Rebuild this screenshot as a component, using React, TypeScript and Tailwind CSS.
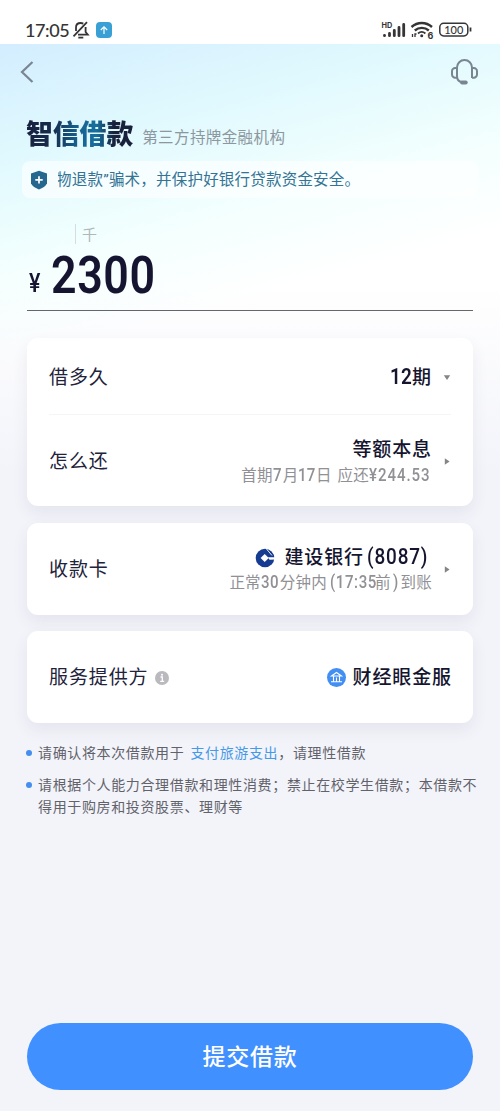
import React from 'react';

function StatusBar() {
  return (
    <header className="flex h-11 shrink-0 items-center justify-between bg-white pt-[15px] pl-[25px] pr-[28px] text-[#353535]">
      <div className="flex items-center">
        <span className="w-[47px] font-['Lato','Noto_Sans_CJK_SC',sans-serif] text-[18px] leading-5 font-medium tracking-[-0.400px] whitespace-nowrap">17:05</span>
        <svg width="18" height="20" viewBox="0 0 18 20" fill="none" stroke="currentColor" strokeWidth="1.800">
          <path d="M15 2.200 1.500 16.300" />
          <path d="M4 11V7.500C4 4.500 6 3 8.700 3c1 0 1.800.2 2.600.6M13.600 7v5l2.200 2.700H6" />
          <path d="M6.300 17.600h5" />
        </svg>
        <span className="ml-[6px] flex size-4 items-center justify-center rounded-[4px] bg-[#39a0d6]">
          <svg width="10" height="10" viewBox="0 0 10 10" fill="none" stroke="white" strokeWidth="1.200"><path d="M5 9V2M1.800 5 5 1.800 8.200 5" /></svg>
        </span>
      </div>
      <svg width="92" height="20" viewBox="380 19.500 92 20" fill="none" stroke="currentColor">
        <text x="381.500" y="27.300" fontFamily="Inter, sans-serif" fontSize="7.300" fontWeight="700" fill="currentColor" stroke="none">HD</text>
        <g strokeWidth="2.800" strokeLinecap="round">
          <path d="M384.500 34.800v.4M389.500 33v2.200M394.300 29.800v5.400M399 27v8.200M403.700 24v11.200" />
        </g>
        <g strokeWidth="2.400">
          <path d="M411.500 26.500c6-5.300 14.500-5.300 20.500 0M414.800 30c4-3.500 10-3.500 14 0" />
          <path d="M418 33c2.200-1.900 5.200-1.900 7.400 0" strokeWidth="1.800" />
        </g>
        <circle cx="421.700" cy="35.200" r="1.500" fill="currentColor" stroke="none" />
        <path d="M412.500 33.500v3M415 36.500v-3h1.500" strokeWidth="1.300" />
        <text x="427.500" y="38" fontFamily="Inter, sans-serif" fontSize="9" fontWeight="700" fill="currentColor" stroke="none">6</text>
        <rect x="439.800" y="22.800" width="28" height="12.600" rx="3.800" strokeWidth="1.500" />
        <path d="M470.500 27v4" strokeWidth="1.800" />
        <text x="453.800" y="33.200" textAnchor="middle" fontFamily="Lato, sans-serif" fontSize="11" fontWeight="500" fill="currentColor" stroke="none">100</text>
      </svg>
    </header>
  );
}

function NavBar() {
  return (
    <nav className="flex h-[56px] items-center justify-between pl-5 pr-[21px] text-[#798590]">
      <svg width="14" height="22" viewBox="0 0 14 22" fill="none" stroke="currentColor" strokeWidth="2.200"><path d="M12.500 1 2 11l10.500 10" /></svg>
      <svg width="29" height="28" viewBox="0 0 29 28" fill="none" stroke="currentColor" strokeWidth="2">
        <path d="M7 20V9.500a7.500 7.500 0 0 1 15 0V20" />
        <path d="M6.500 10H5.300A3.200 3.200 0 0 0 2 13.200v3.300a3.200 3.200 0 0 0 3.300 3.200H7M22.500 10h1.200a3.200 3.200 0 0 1 3.300 3.200v3.300a3.200 3.200 0 0 1-3.300 3.200H22" />
        <path d="M7 18c0 3.500 2 5.800 5 6" />
        <path d="M12 24.500h3.800" strokeWidth="3.800" strokeLinecap="round" />
      </svg>
    </nav>
  );
}

function Arrow({ down = false }: { down?: boolean }) {
  return (
    <svg width="8" height="8" viewBox="0 0 8 8" fill="#858589" className="shrink-0">
      <path d={down ? 'M.8 1.200h6.400L4 6z' : 'M1.800.3v6.400L6.600 3.500z'} />
    </svg>
  );
}

/* Condensed figures; `box` sets the width, the type size and the weight. */
function Num({ box, children }: { box: string; children: string }) {
  return (
    <span className={`inline-block leading-none ${box}`}>
      <span className="inline-block origin-left scale-x-[0.860] whitespace-nowrap">{children}</span>
    </span>
  );
}

const label = 'text-[19px] leading-6 tracking-[0.900px] text-[#22223a] whitespace-nowrap';
const value = 'text-[19px] leading-6 font-medium tracking-[0.900px] text-[#15152f] whitespace-nowrap';
const detail = 'text-[15.500px] leading-5 tracking-[0.200px] text-[#909095] whitespace-nowrap';
const card = 'rounded-[11px] bg-white px-[22px] shadow-[0_7px_16px_rgba(60,60,90,0.08)]';

function BankLogo() {
  return (
    <svg width="20" height="20" viewBox="0 0 20 20" className="mr-[9px] shrink-0">
      <circle cx="10" cy="10" r="9.300" fill="#153c91" />
      <path d="m9.700 5.900 4.100 4.100-4.100 4.100L5.600 10z" fill="white" />
      <path d="M13 9.300h7v2.200l-5.500.2z" fill="white" />
      <path d="m11.500 1 5.500 6.500" stroke="white" strokeWidth="0.900" />
    </svg>
  );
}

export default function App() {
  return (
    <div className="flex h-[1111px] w-[500px] flex-col overflow-hidden bg-[#f3f4fa] font-['Roboto','Noto_Sans_CJK_SC',sans-serif]">
      <StatusBar />
      <main className="flex flex-1 flex-col bg-[linear-gradient(180deg,rgba(243,244,250,0)_240px,#f3f4fa_430px),linear-gradient(165deg,#d3edff_0px,#e0f9fe_110px,#f3fffe_220px,#ffffff_310px)]">
        <NavBar />
        <div className="flex h-[61px] items-end pl-[26px]">
          <h1 className="mr-[9px] mb-[8px] bg-[linear-gradient(90deg,#18213f_0%,#172a4b_24%,#17618e_48%,#176f9e_66%,#18203c_82%)] bg-clip-text text-[26.800px] leading-9 font-black whitespace-nowrap text-transparent">智信借款</h1>
          <p className="mb-[13px] text-[15.500px] leading-5 tracking-[0.400px] text-[#8c979e] whitespace-nowrap">第三方持牌金融机构</p>
        </div>
        <div className="ml-[22px] flex h-[37px] w-[456px] items-center rounded-lg bg-white/60 pl-2">
          <svg width="18" height="20" viewBox="0 0 18 20"><path d="M9 .8 17 3.500v9.800C16 16.200 12.500 18 9 19.500 5.500 18 2 16.200 1 13.300V3.500z" fill="#246890" /><path d="M9 6.200v7.400M5.300 9.900h7.400" stroke="white" strokeWidth="1.700" /></svg>
          <p className="ml-[10px] overflow-hidden text-[15.500px] leading-6 tracking-[0.210px] text-[#347394] whitespace-nowrap"><span className="-ml-[2px]">物退款”骗术，并保护好银行贷款资金安全。</span></p>
        </div>
        <section className="mx-[27px] h-[113px] border-b-[1.500px] border-[#66656c]">
          <div className="flex h-[51px] items-end pb-1 pl-12">
            <span className="mb-px h-5 w-px bg-[#d7dcdf]" />
            <span className="ml-[6px] text-[15px] leading-5 text-[#b1b6bb]">千</span>
          </div>
          <div className="flex h-[53px] items-end text-[#151532]">
            <Num box="mb-[6px] ml-[2px] w-[22px] text-[25px] font-medium">¥</Num>
            <Num box="text-[52px] w-[106px] font-semibold tracking-[0.700px]">2300</Num>
          </div>
        </section>

        <div className="mx-[27px] mt-[27px] flex flex-col gap-4">
          <section className={card}>
            <div className="flex h-[77px] items-center border-b border-[#f5f5f7] pt-[3px]">
              <span className={label}>借多久</span>
              <span className={`${value} mr-[11px] ml-auto`}><Num box="text-[22px] w-[22px] font-semibold tracking-[0.200px]">12</Num>期</span>
              <Arrow down />
            </div>
            <div className="flex h-[91px] items-center pt-[2px]">
              <span className={label}>怎么还</span>
              <div className="mr-[11px] ml-auto flex flex-col items-end gap-[4px]">
                <span className={value}>等额本息</span>
                <span className={detail}>首期<Num box="text-[17.500px] w-[10px] font-medium">7</Num>月<Num box="text-[17.500px] w-[17.500px] font-medium tracking-[0.300px]">17</Num>日<span className="ml-[6px]">应还</span><Num box="text-[17.500px] w-[63px] font-medium tracking-[1.100px]">¥244.53</Num></span>
              </div>
              <Arrow />
            </div>
          </section>
          <section className={`${card} mt-[0.500px] flex h-[92px] items-center pt-[2px]`}>
            <span className={label}>收款卡</span>
            <div className="mr-[11px] ml-auto flex flex-col items-end gap-[3px]">
              <span className="flex items-center"><BankLogo /><span className={value}>建设银行<Num box="ml-[3px] text-[22px] w-[65px] font-medium tracking-[1px]">(8087)</Num></span></span>
              <span className={detail}>正常<Num box="text-[17.500px] w-[19px] font-medium tracking-[0.400px]">30</Num>分钟内<Num box="ml-[3px] text-[17.500px] w-[45px] font-medium tracking-[0.700px]">(17:35</Num>前<Num box="ml-[2px] text-[17.500px] w-[8px] font-medium">)</Num>到账</span>
            </div>
            <Arrow />
          </section>
          <section className={`${card} flex h-[92px] items-center pt-[2px]`}>
            <span className={label}>服务提供方</span>
            <svg width="14" height="14" viewBox="0 0 14 14" className="ml-[6px]"><circle cx="7" cy="7" r="7" fill="#b9b9be" /><path d="M5.500 6h1.800v4.200M5.200 10.300h4" stroke="white" strokeWidth="1.300" fill="none" /><circle cx="7" cy="3.700" r="1" fill="white" /></svg>
            <svg width="19" height="19" viewBox="0 0 19 19" className="mr-[6px] ml-auto"><circle cx="9.500" cy="9.500" r="9.500" fill="#438ef3" /><path d="m4.500 8 5-3.500 5 3.500zM6.500 8v5.500M9.500 9.500v4M12.500 8v5.500M4 13.700h11" stroke="white" strokeWidth="1.100" fill="none" /></svg>
            <span className={`${value} -mr-px`}>财经眼金服</span>
          </section>
        </div>

        <ul className="mt-[19.500px] ml-[26px] flex flex-col gap-[10px] text-[14px] leading-[22px] tracking-[0.640px] text-[#62626b]">
          <li className="flex whitespace-nowrap"><span className="mt-[8px] mr-[6px] size-[6px] shrink-0 rounded-full bg-[#438ef0]" /><span>请确认将本次借款用于<span className="ml-[6px] text-[#4698e8]">支付旅游支出</span>，请理性借款</span></li>
          <li className="flex whitespace-nowrap"><span className="mt-[8px] mr-[6px] size-[6px] shrink-0 rounded-full bg-[#438ef0]" /><span>请根据个人能力合理借款和理性消费；禁止在校学生借款；本借款不<br />得用于购房和投资股票、理财等</span></li>
        </ul>
        <button className="mx-[27px] mt-auto mb-[21px] h-[67px] shrink-0 rounded-full bg-[#4190ff] pt-[2px] text-[23px] leading-8 font-medium tracking-[0.800px] text-white">提交借款</button>
      </main>
    </div>
  );
}
